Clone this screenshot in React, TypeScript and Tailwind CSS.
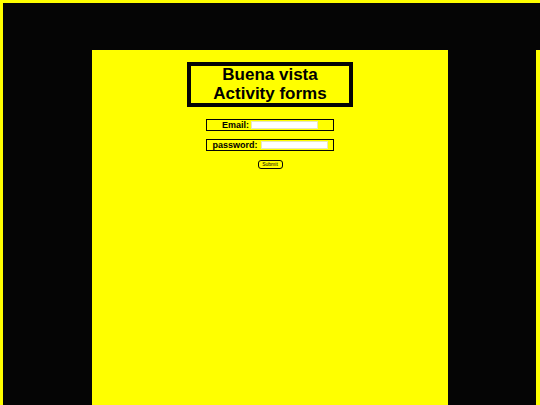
export default function App() {
  return (
    <div className="w-full h-[405px] bg-[#ffff00] overflow-hidden pt-[3px] pl-[3px] font-['Liberation_Sans',Arial,sans-serif]">
      <div className="bg-[#050505] h-full flex flex-col">
        <div className="h-[47px]" />
        <div className="flex-1 flex">
          <div className="w-[89px]" />
          <div className="w-[356px] bg-[#ffff00] flex flex-col items-center pt-[12px]">
            <div className="w-[166px] h-[45px] border-[4px] border-[#050505] flex flex-col items-center justify-center text-[17px] font-bold leading-[18.5px] text-black">
              <span>Buena vista</span>
              <span>Activity forms</span>
            </div>

            <div className="mt-[12px] w-[128px] h-[12px] border-[1.5px] border-[#050505] flex items-center justify-center gap-[2px]">
              <label className="text-[9px] font-bold leading-none text-black">Email:</label>
              <input type="text" className="w-[67px] h-[8px] bg-white border border-[#e5e5c0] outline-none" />
            </div>

            <div className="mt-[8px] w-[128px] h-[12px] border-[1.5px] border-[#050505] flex items-center justify-center gap-[3px]">
              <label className="text-[9px] font-bold leading-none text-black">password:</label>
              <input type="password" className="w-[67px] h-[8px] bg-white border border-[#e5e5c0] outline-none" />
            </div>

            <button
              type="button"
              className="mt-[9px] w-[25px] h-[9px] rounded-[3px] border-[1.5px] border-[#050505] bg-[#ffff00] text-[5px] leading-none text-black flex items-center justify-center"
            >
              Submit
            </button>
          </div>
          <div className="w-[88px]" />
          <div className="flex-1 bg-[#ffff00]" />
        </div>
      </div>
    </div>
  );
}
